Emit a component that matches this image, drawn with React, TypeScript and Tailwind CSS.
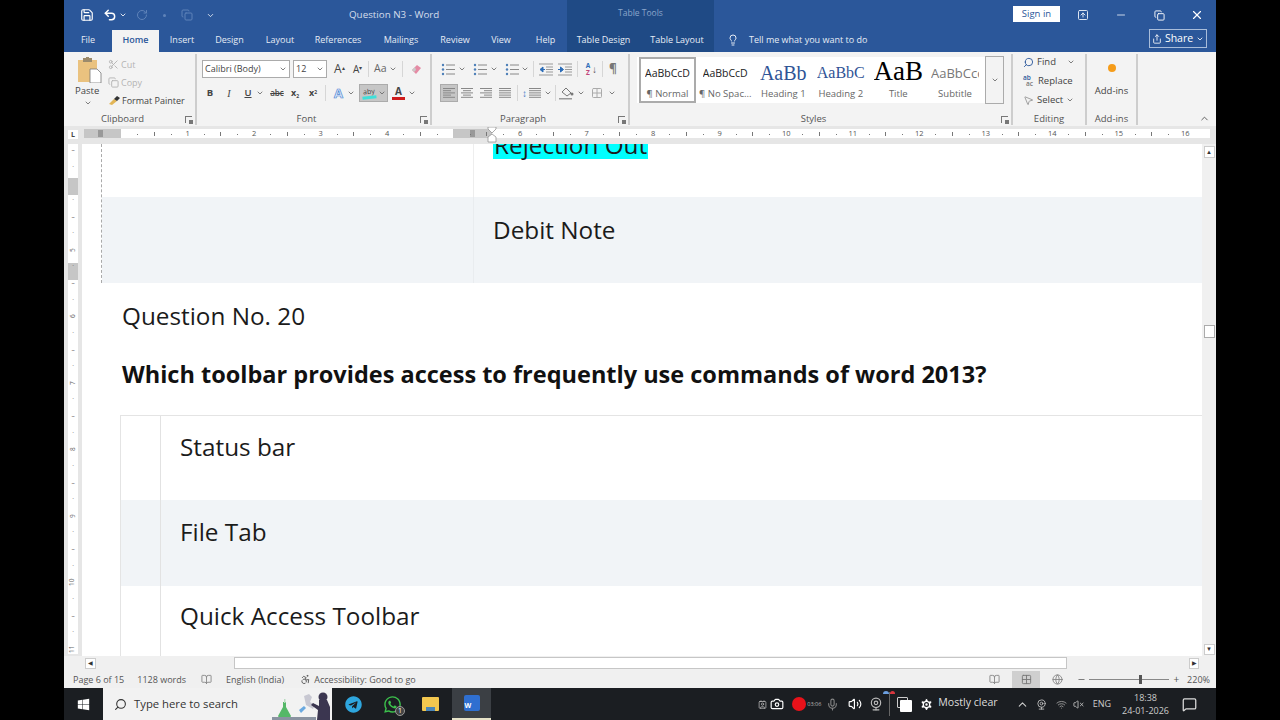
import type { ReactNode } from "react";
import {
  Save, Undo2, RotateCw, Copy, Scissors, ChevronDown, ChevronUp, Lightbulb, Share, Search, MousePointer2,
  Minus, X, BookOpen, Camera, Mic, Volume2, Webcam, Settings, Wifi, VolumeX, MessageSquare, Contact,
  Accessibility, SquareArrowUp, Grid2x2, Globe, Copy as Restore,
} from "lucide-react";
import { FaTelegram, FaWhatsapp, FaWindows } from "react-icons/fa";

const tabs = [
  { name: "File", w: "w-[48px]" },
  { name: "Insert", w: "w-[46px]" },
  { name: "Design", w: "w-[49px]" },
  { name: "Layout", w: "w-[52px]" },
  { name: "References", w: "w-[64px]" },
  { name: "Mailings", w: "w-[62px]" },
  { name: "Review", w: "w-[46px]" },
  { name: "View", w: "w-[46px]" },
  { name: "Help", w: "w-[43px]" },
];

// one entry per quarter inch, starting just right of the left margin
const rulerMarks = Array.from({ length: 64 }, (_, i) => i + 1);
const sideMarks = Array.from({ length: 31 }, (_, i) => i);

function Launcher() {
  return (
    <span className="w-[7px] h-[7px] border-l border-t border-[#777] relative inline-block">
      <span className="block w-[4px] h-[4px] bg-[#777] mt-[3px] ml-[3px]" />
    </span>
  );
}

function Group({ w, label, launcher, children }: { w: string; label: string; launcher?: boolean; children: ReactNode }) {
  return (
    <div className={`${w} h-[71px] mt-[2px] flex flex-col border-r-2 border-[#cdcdcd] relative`}>
      <div className="h-[58px] flex-none">{children}</div>
      <div className={`h-[14px] flex-none flex items-center justify-center text-[9.5px] text-[#555] ${launcher ? "pr-[14px]" : ""}`}>{label}</div>
      {launcher && (
        <div className="absolute right-[3px] bottom-[1px] leading-none">
          <Launcher />
        </div>
      )}
    </div>
  );
}

function Style({ sample, cls, label, w, selected }: { sample: string; cls: string; label: string; w: string; selected?: boolean }) {
  return (
    <div className={`${w} h-[46px] flex flex-col items-center flex-none ${selected ? "border-2 border-[#ababab]" : "border-y-2 border-white"}`}>
      <div className={`h-[28px] leading-[28px] whitespace-nowrap overflow-hidden ${cls}`}>{sample}</div>
      <div className="text-[9.5px] text-[#666] whitespace-nowrap mt-px">{label}</div>
    </div>
  );
}

function Caret({ cls = "" }: { cls?: string }) {
  return <ChevronDown size={8} strokeWidth={2.5} className={`text-[#666] flex-none ${cls}`} />;
}

function Sep({ cls = "" }: { cls?: string }) {
  return <span className={`w-px h-[16px] bg-[#d6d6d6] flex-none ${cls}`} />;
}

function Lines({ kind, cls = "" }: { kind: "left" | "center" | "right" | "justify"; cls?: string }) {
  const rows = [
    [1, 13],
    [kind === "justify" ? 1 : kind === "left" ? 1 : kind === "center" ? 3 : 5, kind === "justify" ? 13 : kind === "left" ? 9 : kind === "center" ? 11 : 13],
    [1, 13],
    [kind === "justify" ? 1 : kind === "left" ? 1 : kind === "center" ? 3 : 5, kind === "justify" ? 13 : kind === "left" ? 9 : kind === "center" ? 11 : 13],
    [1, 13],
  ];
  return (
    <svg width="14" height="12" viewBox="0 0 14 12" className={`flex-none ${cls}`}>
      {rows.map(([a, b], i) => (
        <line key={i} x1={a} x2={b} y1={1.5 + i * 2.2} y2={1.5 + i * 2.2} stroke="#888" strokeWidth="1" />
      ))}
    </svg>
  );
}

function Bullets({ cls = "" }: { cls?: string }) {
  return (
    <svg width="14" height="13" viewBox="0 0 14 13" className={`flex-none ${cls}`}>
      {[2, 6.5, 11].map((y) => (
        <g key={y}>
          <circle cx="2" cy={y} r="1.2" fill="#4d7fb8" />
          <line x1="5" x2="14" y1={y} y2={y} stroke="#888" />
        </g>
      ))}
    </svg>
  );
}

function Indent({ flip, cls = "" }: { flip?: boolean; cls?: string }) {
  return (
    <svg width="14" height="13" viewBox="0 0 14 13" className={`flex-none ${cls}`}>
      {[1, 12].map((y) => (
        <line key={y} x1="0" x2="14" y1={y} y2={y} stroke="#999" />
      ))}
      {[4, 6.5, 9].map((y) => (
        <line key={y} x1="7" x2="14" y1={y} y2={y} stroke="#999" />
      ))}
      <path d={flip ? "M0 6.5h4M2.5 4l3 2.5-3 2.5z" : "M6 6.5H2M4 4L1 6.5 4 9z"} stroke="#2b6cb8" fill="#2b6cb8" />
    </svg>
  );
}

function PasteIcon() {
  return (
    <svg width="24" height="26" viewBox="0 0 24 26">
      <rect x="0" y="3" width="19" height="22" fill="#eac27f" />
      <rect x="5" y="1" width="9" height="4" fill="#9b8a6c" />
      <rect x="8" y="0" width="3" height="2" fill="#9b8a6c" />
      <path d="M12 12h7l4 4v10H12z" fill="#fff" stroke="#777" strokeWidth="0.8" />
    </svg>
  );
}

function Scientist() {
  return (
    <svg width="60" height="32" viewBox="0 0 60 32" className="absolute right-0 bottom-0">
      <rect x="0" y="29" width="44" height="3" fill="#8a93a1" />
      <path d="M11 14h3v5l5 9a1 1 0 0 1-1 1H7a1 1 0 0 1-1-1l5-9z" fill="#55b868" />
      <path d="M12 11h1.5v4H12z" fill="#b8dcc0" />
      <path d="M27 22l5-4 2 2-5 5z" fill="#6aa9e0" />
      <path d="M32 8l5-2 3 3-2 5 5 3-2 4-7-4z" fill="#c8c8d2" />
      <circle cx="51" cy="9" r="4.5" fill="#3b3650" />
      <path d="M47 12h8l3 7v13H45l1-10-7-5 2-2 6 3z" fill="#3b3650" />
    </svg>
  );
}

function RulerMark({ m }: { m: number }) {
  if (m % 4 === 0) return <>{m / 4 === 5 ? "" : m / 4}</>;
  if (m % 2 === 0) return <span className="inline-block w-px h-[4px] bg-[#777] align-middle" />;
  return <span className="inline-block w-px h-px bg-[#777] align-middle" />;
}

function HRuler() {
  return (
    <div className="h-[18px] bg-[#e6e6e6] flex items-start flex-none">
      <div className="w-[10px] h-[9px] mt-[4px] ml-[4px] bg-white flex items-center justify-center text-[7px] font-bold text-[#444] flex-none leading-none">L</div>
      <div className="flex-1 h-[9px] mt-[3px] ml-[6px] mr-[6px] bg-white relative">
        <div className="absolute left-0 top-0 h-full w-[37px] bg-[#c6c6c6]" />
        <div className="absolute left-[14px] top-[1px] w-[5px] h-[7px] bg-[#999]" />
        <div className="absolute left-[369px] top-0 h-full w-[39px] bg-[#c6c6c6]" />
        <div className="absolute left-[386px] top-[1px] w-[5px] h-[7px] bg-[#999]" />
        <div className="flex ml-[45.5px] text-[7.5px] leading-[9px] text-[#555] relative overflow-hidden">
          {rulerMarks.map((m) => (
            <span key={m} className="w-[16.625px] flex-none text-center">
              <RulerMark m={m} />
            </span>
          ))}
        </div>
        {/* column indent marker */}
        <svg width="10" height="16" viewBox="0 0 10 16" className="absolute left-[403px] -top-[2px]">
          <path d="M1 0h8v2L5 6 1 2zM5 7l4 3v5H1v-5z" fill="#fff" stroke="#888" strokeWidth="0.7" />
        </svg>
      </div>
    </div>
  );
}

function VRuler() {
  return (
    <div className="w-[18px] bg-[#e6e6e6] flex-none overflow-hidden relative">
      <div className="w-[10px] h-full bg-white ml-[4px] relative">
        <div className="absolute left-0 top-[36px] w-full h-[17px] bg-[#c6c6c6]" />
        <div className="absolute left-0 top-[121px] w-full h-[17px] bg-[#c6c6c6]" />
        <div className="flex flex-col -mt-[2px] text-[6.5px] text-[#666] relative">
          {sideMarks.map((m) => (
            <span key={m} className="h-[16.625px] flex-none flex items-center justify-center leading-none">
              {m % 4 === 2 ? <span className="-rotate-90">{m > 2 ? (m - 6) / 4 + 5 : ""}</span> : m % 4 === 0 ? "–" : "·"}
            </span>
          ))}
        </div>
      </div>
    </div>
  );
}

function Answer({ text, shaded, h, pt }: { text: string; shaded?: boolean; h: string; pt: string }) {
  return (
    <div className={`${h} flex-none flex ${shaded ? "bg-[#f1f4f7]" : "bg-white"}`}>
      <div className="w-[40px] flex-none border-r border-[#e2e2e2]" />
      <div className={`pl-[19px] ${pt} text-[24.3px] leading-[36px] text-[#1b1b1b]`}>{text}</div>
    </div>
  );
}

function Document() {
  return (
    <div className="flex-1 min-w-0 bg-white overflow-hidden flex flex-col">
      <div className="ml-[19px] border-l border-dashed border-[#aaa] flex-none">
        <div className="h-[53px] flex overflow-hidden">
          <div className="w-[372px] flex-none border-r border-[#eeeeee]" />
          <div className="pl-[19px]">
            <div className="mt-[-13px] bg-[#00ffff] text-[24.3px] leading-[28px] text-[#1b1b1b] px-px">Rejection Out</div>
          </div>
        </div>
        <div className="h-[86px] flex bg-[#f1f4f7]">
          <div className="w-[372px] flex-none border-r border-[#e9ecef]" />
          <div className="pl-[19px] pt-[15px] text-[24.3px] leading-[36px] text-[#1b1b1b]">Debit Note</div>
        </div>
      </div>
      <div className="h-[132px] flex-none pl-[40px] pt-[16px]">
        <div className="text-[24.3px] leading-[34px] text-[#1b1b1b]">Question No. 20</div>
        <div className="mt-[24px] text-[23.5px] leading-[34px] font-bold text-[#111]">Which toolbar provides access to frequently use commands of word 2013?</div>
      </div>
      <div className="ml-[38px] border-l border-t border-[#e4e4e4] flex-1">
        <Answer text="Status bar" h="h-[84px]" pt="pt-[13px]" />
        <Answer text="File Tab" shaded h="h-[86px]" pt="pt-[14px]" />
        <Answer text="Quick Access Toolbar" h="h-[86px]" pt="pt-[12px]" />
      </div>
    </div>
  );
}

export default function App() {
  return (
    <div className="w-[1280px] h-[720px] bg-black overflow-hidden flex justify-center" style={{ fontFamily: '"Open Sans", "Noto Sans", sans-serif' }}>
      <div className="w-[1152px] h-full flex flex-col relative">
        {/* title bar */}
        <div className="h-[30px] flex-none bg-[#2b579a] flex items-center text-white">
          <div className="w-[285px] flex items-center pl-[16px] flex-none">
            <Save size={14} />
            <Undo2 size={14} strokeWidth={2.5} className="ml-[9px]" />
            <Caret cls="!text-white ml-[2px]" />
            <RotateCw size={12} className="text-[#5f83b9] ml-[9px]" />
            <span className="w-[3px] h-[3px] rounded-full bg-[#5f83b9] ml-[15px]" />
            <Copy size={12} className="text-[#5f83b9] ml-[15px]" />
            <ChevronDown size={9} className="ml-[13px]" />
          </div>
          <div className="w-[218px] flex-none text-[9.8px] text-[#d5deec]">Question N3 - Word</div>
          <div className="w-[147px] h-full flex-none bg-[#1f4a85] flex items-center justify-center text-[8.5px] text-[#8ba6cb] pb-[3px]">Table Tools</div>
          <div className="flex-1 flex items-center justify-end">
            <div className="w-[47px] h-[16px] bg-white text-[#2b579a] text-[9.5px] flex items-center justify-center mr-[17px] -mt-[2px]">Sign in</div>
            <SquareArrowUp size={12} className="mr-[26px] text-[#dce4f0]" />
            <Minus size={12} className="mr-[27px] text-[#c9d6e8]" />
            <Restore size={11} className="mr-[25px]" />
            <X size={14} className="mr-[12px]" />
          </div>
        </div>
        {/* tabs */}
        <div className="h-[22px] flex-none bg-[#2b579a] flex items-stretch text-[#e6ecf5] text-[9px]">
          <div className={`${tabs[0].w} flex items-center justify-center pb-[3px]`}>File</div>
          <div className="w-[47px] bg-[#f3f3f3] text-[#2b579a] font-semibold flex items-center justify-center pb-[3px]">Home</div>
          {tabs.slice(1).map((t) => (
            <div key={t.name} className={`${t.w} flex items-center justify-center pb-[3px]`}>{t.name}</div>
          ))}
          <div className="w-[147px] bg-[#1f4a85] flex">
            <div className="w-[73px] flex items-center justify-center pb-[3px]">Table Design</div>
            <div className="w-[74px] flex items-center justify-center pb-[3px]">Table Layout</div>
          </div>
          <div className="flex items-center pl-[13px] gap-[10px] pb-[3px]">
            <Lightbulb size={12} />
            <span>Tell me what you want to do</span>
          </div>
          <div className="ml-auto mr-[9px] mt-[-1px] mb-[4px] w-[58px] border border-[#a9bdda] flex items-center justify-center gap-[3px] text-[10.5px] text-white">
            <Share size={10} />
            <span>Share</span>
            <Caret cls="!text-white" />
          </div>
        </div>
        {/* ribbon */}
        <div className="h-[74px] flex-none bg-[#f3f3f3] flex text-[9.5px] text-[#444]">
          <Group w="w-[133px]" label="Clipboard" launcher>
            <div className="flex pt-[3px] pl-[14px]">
              <div className="w-[30px] flex flex-col items-start">
                <PasteIcon />
                <div className="text-[9.5px] leading-[12px] -ml-[3px] mt-[2px]">Paste</div>
                <Caret cls="ml-[6px] mt-[2px]" />
              </div>
              <div className="flex flex-col gap-[5px] text-[9px] pt-[1px]">
                <div className="h-[13px] flex items-center gap-[2px] text-[#b3b3b3]"><Scissors size={11} />Cut</div>
                <div className="h-[13px] flex items-center gap-[2px] text-[#b3b3b3]"><Copy size={11} />Copy</div>
                <div className="h-[13px] flex items-center gap-[2px] whitespace-nowrap">
                  <svg width="12" height="11" viewBox="0 0 12 11" className="flex-none">
                    <path d="M1 9l5-5 3 2-5 4z" fill="#e2b556" />
                    <path d="M6 4l3-3 3 2-3 3z" fill="#333" />
                  </svg>
                  Format Painter
                </div>
              </div>
            </div>
          </Group>
          <Group w="w-[235px]" label="Font" launcher>
            <div className="flex flex-col pl-[5px] pt-[6px] gap-[6px]">
              <div className="h-[18px] flex items-center">
                <div className="w-[88px] h-[18px] bg-white border border-[#ababab] flex items-center justify-between px-[2px] text-[9px]">Calibri (Body)<Caret /></div>
                <div className="w-[34px] h-[18px] ml-[3px] bg-white border border-[#ababab] flex items-center justify-between px-[2px] text-[9px]">12<Caret /></div>
                <span className="ml-[7px] text-[12px] w-[19px] leading-none">A<sup className="text-[6px]">▴</sup></span>
                <span className="text-[10px] w-[17px] leading-none">A<sup className="text-[6px]">▾</sup></span>
                <Sep cls="-ml-[2px]" />
                <span className="text-[10.5px] ml-[5px] flex items-center gap-[3px] text-[#666]">Aa<Caret /></span>
                <Sep cls="ml-[5px]" />
                <svg width="13" height="13" viewBox="0 0 13 13" className="ml-[7px] flex-none">
                  <path d="M2 7l5-5 4 3-5 6z" fill="#e58aa4" />
                  <path d="M2 7l3-3 1 3-2 2z" fill="#c9c9c9" />
                </svg>
              </div>
              <div className="h-[18px] flex items-center text-[#444]">
                <span className="w-[10px] ml-[3px] text-center font-bold text-[9.5px]">B</span>
                <span className="w-[10px] ml-[9px] text-center italic text-[10px] [font-family:'Liberation_Serif',serif]">I</span>
                <span className="w-[10px] ml-[9px] text-center underline font-semibold text-[9.5px]">U</span>
                <Caret cls="ml-[3px]" />
                <span className="w-[14px] ml-[6px] text-center line-through text-[8px] font-semibold">abc</span>
                <span className="w-[12px] ml-[5px] text-center text-[9px] font-bold">x<sub className="text-[5px]">2</sub></span>
                <span className="w-[12px] ml-[6px] text-center text-[9px] font-bold">x<sup className="text-[5px]">2</sup></span>
                <Sep cls="ml-[6px]" />
                <span className="ml-[6px] w-[13px] text-[13px] leading-none text-[#dbe8fb] font-bold text-center [-webkit-text-stroke:0.7px_#4d86d1]">A</span>
                <Caret cls="ml-[2px]" />
                <div className="ml-[4px] w-[29px] h-[18px] bg-[#c6c6c6] border border-[#ababab] flex items-center justify-center gap-[2px]">
                  <div className="flex flex-col items-center w-[14px] text-[7px] leading-[9px] -rotate-6">aby<span className="block w-full h-[3px] bg-[#3fe0d9]" /></div>
                  <Caret />
                </div>
                <div className="ml-[4px] flex flex-col items-center w-[13px] text-[10px] font-bold leading-[11px]">A<span className="block w-full h-[3px] bg-[#d01c1c]" /></div>
                <Caret cls="ml-[3px]" />
              </div>
            </div>
          </Group>
          <Group w="w-[198px]" label="Paragraph" launcher>
            <div className="flex flex-col pl-[8px] pt-[6px] gap-[6px] text-[#666]">
              <div className="h-[18px] flex items-center">
                <Bullets cls="ml-[1px]" /><Caret cls="ml-[3px]" />
                <Bullets cls="ml-[7px]" /><Caret cls="ml-[3px]" />
                <Bullets cls="ml-[7px]" /><Caret cls="ml-[2px]" />
                <Sep cls="ml-[4px]" />
                <Indent cls="ml-[5px]" />
                <Indent flip cls="ml-[5px]" />
                <Sep cls="ml-[5px]" />
                <div className="ml-[6px] w-[8px] flex flex-col items-center text-[6.5px] leading-[7px] font-bold">
                  <span className="text-[#2b6cb8]">A</span>
                  <span className="text-[#c0457a]">Z</span>
                </div>
                <span className="text-[#555] text-[10px] leading-none">↓</span>
                <Sep cls="ml-[5px]" />
                <span className="ml-[6px] text-[12px] leading-none font-bold text-[#777]">¶</span>
              </div>
              <div className="h-[18px] flex items-center">
                <div className="w-[18px] h-[18px] bg-[#c6c6c6] border border-[#ababab] flex items-center justify-center"><Lines kind="left" /></div>
                <Lines kind="center" cls="ml-[2px]" />
                <Lines kind="right" cls="ml-[5px]" />
                <Lines kind="justify" cls="ml-[5px]" />
                <Sep cls="ml-[5px]" />
                <span className="ml-[4px] text-[#3f7cc4] text-[10px] leading-none">↕</span>
                <Lines kind="justify" cls="ml-[1px]" />
                <Caret cls="ml-[2px]" />
                <Sep cls="ml-[3px]" />
                <svg width="15" height="14" viewBox="0 0 15 14" className="ml-[3px] flex-none">
                  <path d="M3 6l4-4 5 5-4 3z" fill="none" stroke="#777" />
                  <circle cx="13" cy="8" r="1.5" fill="#777" />
                  <rect x="0" y="12" width="13" height="1.5" fill="#999" />
                </svg>
                <Caret cls="ml-[3px]" />
                <Grid2x2 size={12} className="ml-[6px] text-[#aaa]" />
                <Caret cls="ml-[5px]" />
              </div>
            </div>
          </Group>
          <Group w="w-[383px]" label="Styles" launcher>
            <div className="flex pt-[2px] pl-[7px]">
              <div className="w-[348px] h-[46px] mt-px bg-white flex flex-none overflow-hidden pl-[2px]">
                <Style w="w-[57px]" sample="AaBbCcD" cls="text-[10.5px] text-[#222]" label="¶ Normal" selected />
                <Style w="w-[58.5px]" sample="AaBbCcD" cls="text-[10.5px] text-[#222]" label="¶ No Spac..." />
                <Style w="w-[57.5px]" sample="AaBb" cls="text-[20px] text-[#2f5496] [font-family:'Liberation_Serif',serif]" label="Heading 1" />
                <Style w="w-[57.5px]" sample="AaBbC" cls="text-[16px] text-[#2f5496] [font-family:'Liberation_Serif',serif]" label="Heading 2" />
                <Style w="w-[57.5px]" sample="AaB" cls="text-[27px] text-black [font-family:'Liberation_Serif',serif] !leading-[24px]" label="Title" />
                <Style w="w-[50px] ml-[3px]" sample="AaBbCcc" cls="text-[13px] text-[#777] w-[48px]" label="Subtitle" />
              </div>
              <div className="w-[19px] h-[48px] border border-[#ababab] flex items-center justify-center"><Caret /></div>
            </div>
          </Group>
          <Group w="w-[74px]" label="Editing">
            <div className="flex flex-col pl-[10px] pt-[1px] gap-[5px] text-[9.5px]">
              <div className="h-[14px] flex items-center gap-[3px]"><Search size={11} className="text-[#2b579a] -scale-x-100" />Find<Caret cls="ml-[8px]" /></div>
              <div className="h-[14px] flex items-center gap-[2px]">
                <span className="w-[13px] flex flex-col text-[6.5px] leading-[6px] text-[#2b579a] font-semibold"><span>ab</span><span className="pl-[3px] text-[#777]">ac</span></span>
                Replace
              </div>
              <div className="h-[14px] flex items-center gap-[3px]"><MousePointer2 size={11} className="text-[#999]" />Select<Caret /></div>
            </div>
          </Group>
          <Group w="w-[51px]" label="Add-ins">
            <div className="flex flex-col items-center pt-[10px]">
              <span className="w-[8px] h-[8px] rounded-full bg-[#f59c1a]" />
              <span className="mt-[12px]">Add-ins</span>
            </div>
          </Group>
          <div className="flex-1 flex items-end justify-end pr-[6px] pb-[2px]">
            <ChevronUp size={11} className="text-[#555]" />
          </div>
        </div>
        <HRuler />
        {/* document */}
        <div className="flex-1 min-h-0 flex">
          <VRuler />
          <Document />
          <div className="w-[14px] bg-[#f0f0f0] flex-none flex flex-col items-center pt-[2px] pb-[1px]">
            <div className="w-[11px] h-[12px] bg-white border border-[#ccc] flex items-center justify-center text-[6px] text-[#333]">▲</div>
            <div className="w-[11px] h-[13px] bg-white border border-[#ababab] mt-[167px]" />
            <div className="w-[11px] h-[11px] bg-white border border-[#ccc] flex items-center justify-center text-[6px] text-[#333] mt-auto">▼</div>
          </div>
        </div>
        {/* horizontal scrollbar */}
        <div className="h-[14px] flex-none bg-[#f0f0f0] flex items-center">
          <div className="w-[21px] flex-none" />
          <div className="w-[11px] h-[11px] bg-white border border-[#ccc] flex items-center justify-center text-[6px] text-[#333]">◀</div>
          <div className="w-[833px] h-[12px] ml-[138px] bg-white border border-[#c6c6c6]" />
          <div className="w-[10px] h-[11px] ml-[122px] bg-white border border-[#ccc] flex items-center justify-center text-[6px] text-[#333]">▶</div>
        </div>
        {/* status bar */}
        <div className="h-[18px] flex-none bg-[#f0f0f0] flex items-center text-[9px] text-[#555] pt-px">
          <span className="ml-[9px] whitespace-nowrap">Page 6 of 15</span>
          <span className="ml-[13px] whitespace-nowrap">1128 words</span>
          <BookOpen size={11} className="ml-[15px] text-[#888]" />
          <span className="ml-[14px] whitespace-nowrap">English (India)</span>
          <Accessibility size={11} className="ml-[16px]" />
          <span className="ml-[3px] whitespace-nowrap">Accessibility: Good to go</span>
          <BookOpen size={11} className="ml-auto text-[#888]" />
          <div className="w-[28px] h-[18px] bg-[#cfcfcf] ml-[12px] flex items-center justify-center"><Grid2x2 size={11} className="text-[#777]" /></div>
          <Globe size={11} className="ml-[12px] text-[#888]" />
          <Minus size={9} className="ml-[14px]" />
          <div className="w-[80px] ml-[3px] h-px bg-[#888] flex items-center relative">
            <span className="absolute left-[50px] w-[3px] h-[9px] bg-[#555]" />
          </div>
          <span className="ml-[4px] text-[10px]">+</span>
          <span className="ml-[8px] mr-[6px]">220%</span>
        </div>
        {/* taskbar */}
        <div className="h-[32px] flex-none bg-[#1b1e22] flex items-center text-white">
          <div className="w-[39px] flex-none flex justify-center"><FaWindows size={13} /></div>
          <div className="w-[229px] h-full bg-[#f2f2f2] flex items-center text-[#333] text-[11.3px] flex-none relative overflow-hidden">
            <Search size={13} className="ml-[11px] -scale-x-100" />
            <span className="ml-[7px]">Type here to search</span>
            <Scientist />
          </div>
          <FaTelegram size={17} className="ml-[13px] text-[#2ea6de] flex-none" />
          <div className="ml-[21px] flex-none relative">
            <FaWhatsapp size={19} className="text-[#3cc14c]" />
            <span className="absolute -right-[3px] -bottom-[2px] w-[10px] h-[10px] rounded-full bg-[#444] border border-[#999] text-[7px] leading-[8px] text-center">1</span>
          </div>
          <div className="w-[17px] h-[14px] ml-[20px] flex-none bg-[#f3c74f] flex items-end justify-center rounded-[1px]"><span className="block w-[9px] h-[4px] bg-[#4a86b8]" /></div>
          <div className="w-[39px] h-full ml-[13px] flex-none bg-[#3b3f44] border-b-2 border-[#e6e2c8] flex items-center justify-center">
            <div className="w-[16px] h-[16px] rounded-[2px] bg-[#2f6fd0] flex items-end text-[7px] font-bold pl-px">W</div>
          </div>
          <div className="ml-auto flex items-center">
            <Contact size={9} className="text-[#bbb]" />
            <Camera size={14} className="ml-[3px]" />
            <span className="ml-[8px] w-[14px] h-[14px] rounded-full bg-[#e8121a] flex-none" />
            <span className="ml-px text-[5.5px] text-[#bbb]">03:06</span>
            <Mic size={13} className="ml-[5px] text-[#888]" />
            <Volume2 size={14} className="ml-[9px]" />
            <Webcam size={14} className="ml-[7px] text-[#bbb]" />
            <div className="w-px h-[24px] bg-[#666] ml-[6px] relative">
              <span className="absolute -top-[1px] -left-[6px] w-[6px] h-[3px] rounded-t-full bg-[#6b9fe0]" />
              <span className="absolute -top-[1px] left-[1px] w-[5px] h-[3px] rounded-t-full bg-[#d9363e]" />
            </div>
            <div className="ml-[7px] w-[15px] h-[15px] relative flex-none">
              <span className="absolute left-0 top-0 w-[11px] h-[11px] border border-[#ccc] rounded-[1px]" />
              <span className="absolute right-0 bottom-0 w-[12px] h-[12px] bg-white rounded-[1px]" />
            </div>
            <Settings size={15} className="ml-[7px]" fill="white" stroke="#1b1e22" />
            <span className="ml-[4px] text-[10.6px] text-[#ddd] pb-[3px] whitespace-nowrap">Mostly clear</span>
            <ChevronUp size={13} className="ml-[18px] text-[#ccc]" />
            <Webcam size={11} className="ml-[7px] text-[#bbb]" />
            <Wifi size={11} className="ml-[9px] text-[#999]" />
            <VolumeX size={11} className="ml-[6px] text-[#bbb]" />
            <span className="ml-[9px] text-[9px] text-[#ccc]">ENG</span>
            <div className="ml-[11px] flex flex-col items-center text-[9px] leading-[13px] text-[#ccc]">
              <span>18:38</span>
              <span className="whitespace-nowrap">24-01-2026</span>
            </div>
            <MessageSquare size={15} className="ml-[13px] mr-[19px] text-[#ddd]" />
          </div>
        </div>
      </div>
    </div>
  );
}
